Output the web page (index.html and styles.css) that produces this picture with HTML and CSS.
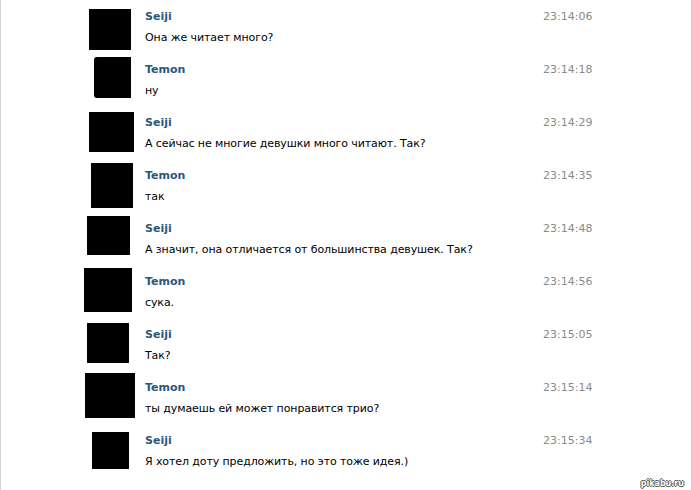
FILE: index.html
```html
<!DOCTYPE html>
<html lang="ru">
<head>
    <meta charset="UTF-8">
    <title>Сообщения</title>
    <link rel="stylesheet" href="styles.css">
</head>
<body>
    <div class="chat">
        <div class="msg">
            <div class="ava-cell"><div class="ava a1"></div></div>
            <div class="body">
                <div class="name">Seiji</div>
                <div class="text">Она же читает много?</div>
            </div>
            <div class="time">23:14:06</div>
        </div>
        <div class="msg">
            <div class="ava-cell"><div class="ava a2"></div></div>
            <div class="body">
                <div class="name">Temon</div>
                <div class="text">ну</div>
            </div>
            <div class="time">23:14:18</div>
        </div>
        <div class="msg">
            <div class="ava-cell"><div class="ava a3"></div></div>
            <div class="body">
                <div class="name">Seiji</div>
                <div class="text">А сейчас не многие девушки много читают. Так?</div>
            </div>
            <div class="time">23:14:29</div>
        </div>
        <div class="msg">
            <div class="ava-cell"><div class="ava a4"></div></div>
            <div class="body">
                <div class="name">Temon</div>
                <div class="text">так</div>
            </div>
            <div class="time">23:14:35</div>
        </div>
        <div class="msg">
            <div class="ava-cell"><div class="ava a5"></div></div>
            <div class="body">
                <div class="name">Seiji</div>
                <div class="text">А значит, она отличается от большинства девушек. Так?</div>
            </div>
            <div class="time">23:14:48</div>
        </div>
        <div class="msg">
            <div class="ava-cell"><div class="ava a6"></div></div>
            <div class="body">
                <div class="name">Temon</div>
                <div class="text">сука.</div>
            </div>
            <div class="time">23:14:56</div>
        </div>
        <div class="msg">
            <div class="ava-cell"><div class="ava a7"></div></div>
            <div class="body">
                <div class="name">Seiji</div>
                <div class="text">Так?</div>
            </div>
            <div class="time">23:15:05</div>
        </div>
        <div class="msg">
            <div class="ava-cell"><div class="ava a8"></div></div>
            <div class="body">
                <div class="name">Temon</div>
                <div class="text">ты думаешь ей может понравится трио?</div>
            </div>
            <div class="time">23:15:14</div>
        </div>
        <div class="msg">
            <div class="ava-cell"><div class="ava a9"></div></div>
            <div class="body">
                <div class="name">Seiji</div>
                <div class="text">Я хотел доту предложить, но это тоже идея.)</div>
            </div>
            <div class="time">23:15:34</div>
        </div>
        <div class="mark">pikabu.ru</div>
    </div>
</body>
</html>
```

FILE: styles.css
```css
html, body {
    margin: 0;
    padding: 0;
    background: #fff;
}
body {
    font-family: 'DejaVu Sans', Verdana, sans-serif;
    font-size: 11px;
    color: #000;
}
.chat {
    position: relative;
    width: 692px;
    height: 490px;
    border-left: 1px solid #d4d4d4;
    border-right: 1px solid #cfcfcf;
    padding-top: 1px;
    box-sizing: border-box;
    overflow: hidden;
}
.msg {
    display: flex;
    height: 53px;
    padding-left: 79px;
}
.ava-cell {
    width: 65px;
    flex: none;
}
.ava {
    background: #000;
}
.a1 { margin: 8px 0 0 9px;  width: 42px; height: 41px; }
.a2 { margin: 3px 0 0 14px; width: 37px; height: 41px; border-radius: 3px 0 0 3px; }
.a3 { margin: 5px 0 0 9px;  width: 45px; height: 40px; }
.a4 { margin: 3px 0 0 11px; width: 42px; height: 45px; }
.a5 { margin: 3px 0 0 7px;  width: 43px; height: 39px; }
.a6 { margin: 2px 0 0 4px;  width: 48px; height: 44px; }
.a7 { margin: 4px 0 0 7px;  width: 42px; height: 40px; }
.a8 { margin: 1px 0 0 5px;  width: 50px; height: 45px; }
.a9 { margin: 7px 0 0 12px; width: 37px; height: 37px; }
.body {
    flex: 1;
}
.name {
    margin-top: 9px;
    line-height: 14px;
    font-weight: bold;
    color: #2b587a;
}
.text {
    margin-top: 7px;
    line-height: 14px;
    letter-spacing: -0.1px;
}
.time {
    width: 148px;
    flex: none;
    margin-top: 9px;
    line-height: 14px;
    color: #8a8a8a;
}
.mark {
    position: absolute;
    right: 7px;
    bottom: 2px;
    font-family: 'DejaVu Sans', sans-serif;
    font-size: 8px;
    font-weight: bold;
    color: #fff;
    text-shadow: 1px 0 #555, -1px 0 #555, 0 1px #555, 0 -1px #555;
}
```
